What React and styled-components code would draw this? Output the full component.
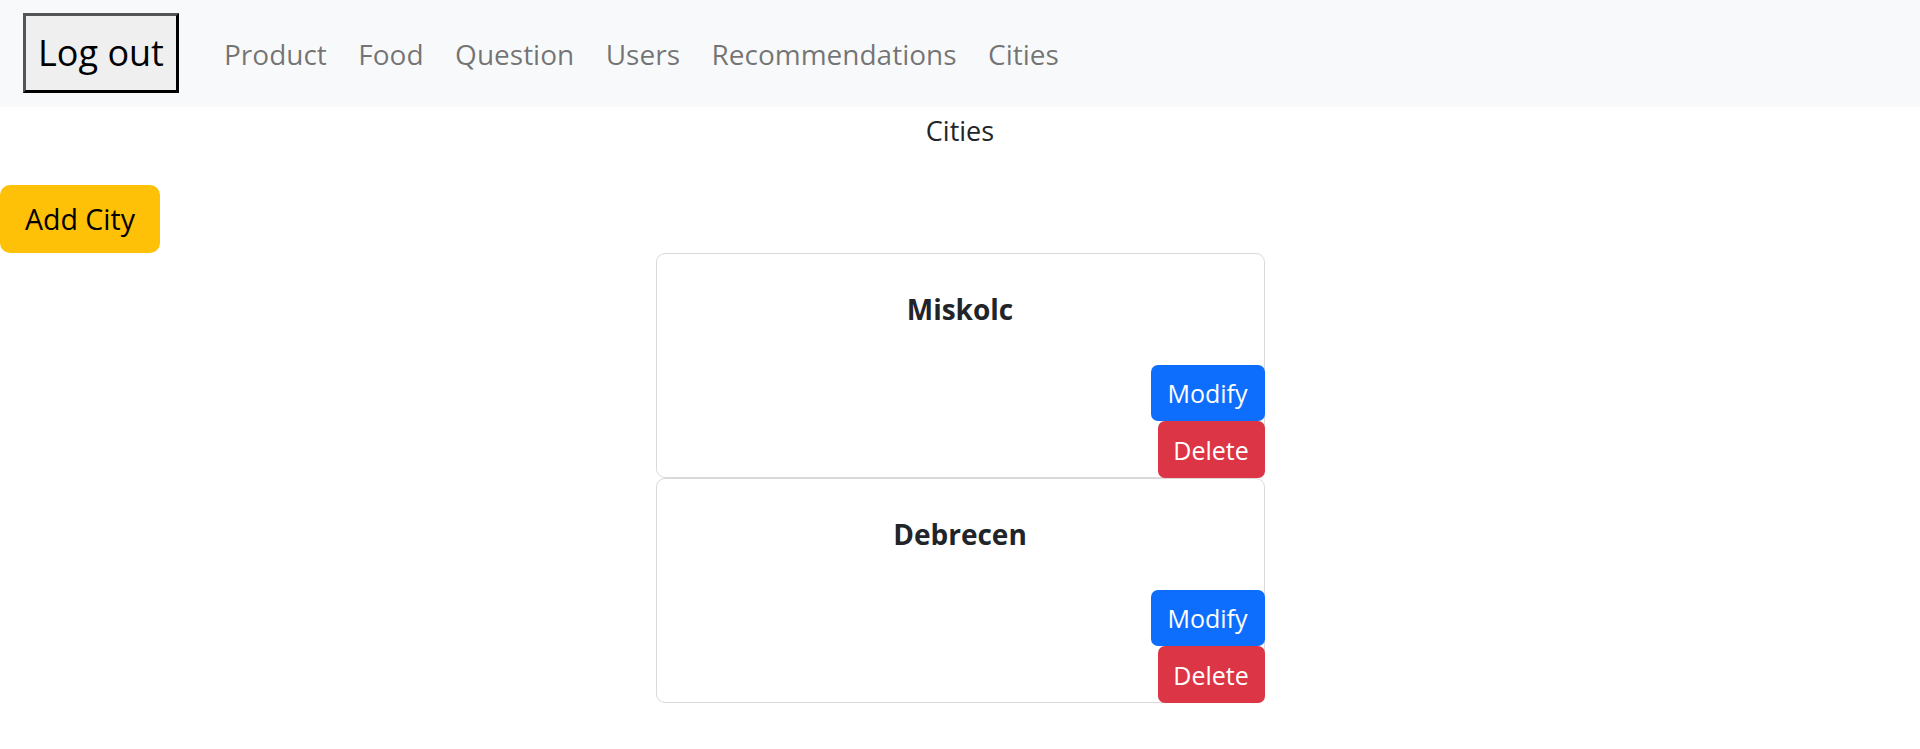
import React from "react";
import styled, { createGlobalStyle } from "styled-components";

const GlobalStyle = createGlobalStyle`
  html, body {
    margin: 0;
    padding: 0;
    background: #ffffff;
    font-family: "Open Sans", "Noto Sans", "Liberation Sans", sans-serif;
    color: #212529;
  }
  * { box-sizing: border-box; }
`;

const Navbar = styled.nav`
  height: 107px;
  background: #f8f9fa;
  display: flex;
  align-items: center;
  padding: 0 23px;
`;

const LogoutButton = styled.button`
  height: 80px;
  width: 156px;
  margin-top: -1px;
  padding: 0;
  background: #efefef;
  border: 3px solid;
  border-color: #555555 #000000 #000000 #555555;
  font-family: inherit;
  font-size: 36px;
  line-height: 1;
  color: #000000;
  cursor: pointer;
`;

const NavLinks = styled.ul`
  list-style: none;
  display: flex;
  gap: 31.5px;
  margin: 0 0 0 45px;
  padding: 0;
`;

const NavLink = styled.a`
  font-size: 28px;
  line-height: 40px;
  color: rgba(0, 0, 0, 0.55);
  text-decoration: none;
`;

const PageTitle = styled.div`
  margin-top: 3px;
  text-align: center;
  font-size: 27px;
  line-height: 42px;
  color: #212529;
`;

const AddButton = styled.button`
  display: block;
  margin-top: 33px;
  width: 160px;
  height: 68px;
  padding: 0;
  border: none;
  border-radius: 10px;
  background: #ffc107;
  color: #000000;
  font-family: inherit;
  font-size: 28.5px;
  cursor: pointer;
`;

const CardList = styled.div`
  display: flex;
  flex-direction: column;
  align-items: center;
`;

const Card = styled.div`
  width: 609px;
  border: 1px solid rgba(0, 0, 0, 0.15);
  border-radius: 9px;
  display: flex;
  flex-direction: column;
`;

const CardTitle = styled.h5`
  margin: 37px 0 0;
  text-align: center;
  font-size: 28px;
  font-weight: 700;
  line-height: 36px;
  color: #212529;
`;

const Actions = styled.div`
  margin: 38px -1px -1px 0;
  display: flex;
  flex-direction: column;
  align-items: flex-end;
`;

const ActionButton = styled.button`
  height: ${(p) => p.$h}px;
  width: ${(p) => p.$w}px;
  padding: 0;
  border: none;
  border-radius: 7px;
  background: ${(p) => p.$bg};
  color: #ffffff;
  font-family: inherit;
  font-size: 25px;
  cursor: pointer;
`;

const links = ["Product", "Food", "Question", "Users", "Recommendations", "Cities"];
const cities = ["Miskolc", "Debrecen"];

export default function App() {
  return (
    <>
      <GlobalStyle />
      <Navbar>
        <LogoutButton>Log out</LogoutButton>
        <NavLinks>
          {links.map((l) => (
            <li key={l}>
              <NavLink href="#">{l}</NavLink>
            </li>
          ))}
        </NavLinks>
      </Navbar>
      <PageTitle>Cities</PageTitle>
      <AddButton>Add City</AddButton>
      <CardList>
        {cities.map((c) => (
          <Card key={c}>
            <CardTitle>{c}</CardTitle>
            <Actions>
              <ActionButton $bg="#0d6efd" $w={114} $h={56}>Modify</ActionButton>
              <ActionButton $bg="#dc3545" $w={107} $h={57}>Delete</ActionButton>
            </Actions>
          </Card>
        ))}
      </CardList>
    </>
  );
}
